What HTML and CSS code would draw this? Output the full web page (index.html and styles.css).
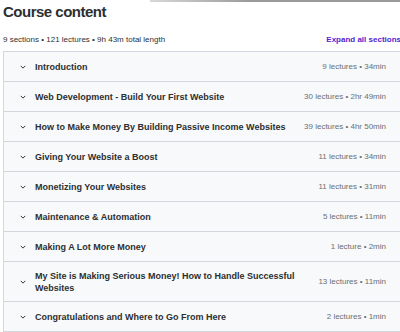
FILE: index.html
```html
<!DOCTYPE html>
<html lang="en">
<head>
    <meta charset="UTF-8">
    <title>Course content</title>
    <link rel="stylesheet" href="styles.css">
</head>
<body>
    <div class="top-shade"></div>

    <div class="course">
        <h2 class="course-title">Course content</h2>

        <div class="course-meta">
            <span>9 sections • 121 lectures • 9h 43m total length</span>
            <button class="expand-all">Expand all sections</button>
        </div>

        <div class="sections">
            <div class="section">
                <svg class="chev" viewBox="0 0 8 5"><path d="M1 1l3 3 3-3"/></svg>
                <span class="section-name">Introduction</span>
                <span class="section-info">9 lectures • 34min</span>
            </div>
            <div class="section">
                <svg class="chev" viewBox="0 0 8 5"><path d="M1 1l3 3 3-3"/></svg>
                <span class="section-name">Web Development - Build Your First Website</span>
                <span class="section-info">30 lectures • 2hr 49min</span>
            </div>
            <div class="section">
                <svg class="chev" viewBox="0 0 8 5"><path d="M1 1l3 3 3-3"/></svg>
                <span class="section-name">How to Make Money By Building Passive Income Websites</span>
                <span class="section-info">39 lectures • 4hr 50min</span>
            </div>
            <div class="section">
                <svg class="chev" viewBox="0 0 8 5"><path d="M1 1l3 3 3-3"/></svg>
                <span class="section-name">Giving Your Website a Boost</span>
                <span class="section-info">11 lectures • 34min</span>
            </div>
            <div class="section">
                <svg class="chev" viewBox="0 0 8 5"><path d="M1 1l3 3 3-3"/></svg>
                <span class="section-name">Monetizing Your Websites</span>
                <span class="section-info">11 lectures • 31min</span>
            </div>
            <div class="section">
                <svg class="chev" viewBox="0 0 8 5"><path d="M1 1l3 3 3-3"/></svg>
                <span class="section-name">Maintenance &amp; Automation</span>
                <span class="section-info">5 lectures • 11min</span>
            </div>
            <div class="section">
                <svg class="chev" viewBox="0 0 8 5"><path d="M1 1l3 3 3-3"/></svg>
                <span class="section-name">Making A Lot More Money</span>
                <span class="section-info">1 lecture • 2min</span>
            </div>
            <div class="section tall">
                <svg class="chev" viewBox="0 0 8 5"><path d="M1 1l3 3 3-3"/></svg>
                <span class="section-name">My Site is Making Serious Money! How to Handle Successful Websites</span>
                <span class="section-info">13 lectures • 11min</span>
            </div>
            <div class="section">
                <svg class="chev" viewBox="0 0 8 5"><path d="M1 1l3 3 3-3"/></svg>
                <span class="section-name">Congratulations and Where to Go From Here</span>
                <span class="section-info">2 lectures • 1min</span>
            </div>
        </div>
    </div>
</body>
</html>
```
FILE: styles.css
```css
body {
    margin: 0;
    background-color: #fff;
    font-family: "Liberation Sans", Arial, sans-serif;
    color: #2d2f31;
    overflow: hidden;
}

/* faint shadow of the sticky bar above */
.top-shade {
    height: 2px;
    margin-left: 150px;
    background: linear-gradient(to right, #d8d8d8, #9a9a9a 40%, #9a9a9a);
}

.course {
    width: 412px;
    padding-left: 3px;
}

.course-title {
    margin: 0;
    font-size: 15px;
    line-height: 20px;
    font-weight: 700;
    letter-spacing: -0.5px;
}

.course-meta {
    display: flex;
    justify-content: space-between;
    align-items: center;
    margin-top: 10px;
    height: 14px;
    font-size: 8px;
    color: #2d2f31;
}

.expand-all {
    border: none;
    background: none;
    padding: 0;
    margin-right: 14px;
    font-family: inherit;
    font-size: 8px;
    font-weight: 700;
    color: #5624d0;
    cursor: pointer;
}

.sections {
    margin-top: 5px;
    border: 1px solid #d1d7dc;
    border-bottom: none;
}

.section {
    display: flex;
    align-items: center;
    height: 29px;
    padding: 0 28px 0 16px;
    background-color: #f7f9fa;
    border-bottom: 1px solid #d1d7dc;
}

.section.tall {
    height: 39px;
}

.chev {
    width: 6px;
    height: 4px;
    margin-right: 9px;
    flex-shrink: 0;
    fill: none;
    stroke: #2d2f31;
    stroke-width: 1.3;
}

.section-name {
    flex: 1;
    font-size: 9px;
    font-weight: 700;
    line-height: 12px;
    padding-right: 10px;
}

.section-info {
    font-size: 8px;
    color: #6a6f73;
    white-space: nowrap;
}
```
